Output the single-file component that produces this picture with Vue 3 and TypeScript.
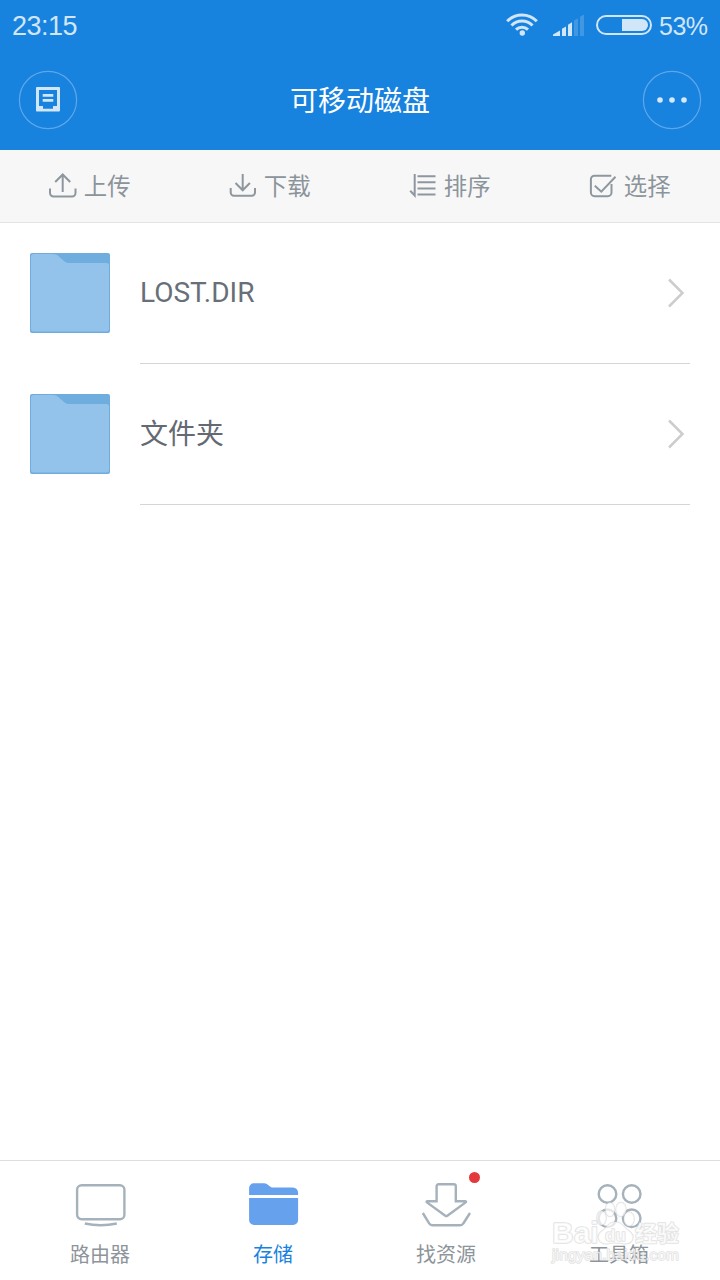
<script setup lang="ts">
interface FileEntry {
  name: string
}

interface Action {
  id: 'upload' | 'download' | 'sort' | 'select'
  label: string
}

interface Tab {
  id: 'router' | 'storage' | 'find' | 'tools'
  label: string
  active?: boolean
  badge?: boolean
}

const actions: Action[] = [
  { id: 'upload', label: '上传' },
  { id: 'download', label: '下载' },
  { id: 'sort', label: '排序' },
  { id: 'select', label: '选择' },
]

const files: FileEntry[] = [{ name: 'LOST.DIR' }, { name: '文件夹' }]

const tabs: Tab[] = [
  { id: 'router', label: '路由器' },
  { id: 'storage', label: '存储', active: true },
  { id: 'find', label: '找资源', badge: true },
  { id: 'tools', label: '工具箱' },
]

const isHan = (text: string): boolean => /[\u4e00-\u9fff]/.test(text)
</script>

<template>
  <div class="screen">
    <header class="header">
      <div class="status">
        <span class="clock">23:15</span>
        <div class="indicators">
          <svg class="wifi" width="34" height="24" viewBox="0 0 34 24" fill="none">
            <g stroke="#d1e6f8" stroke-width="3">
              <path d="M2.2 9.2A20.5 20.5 0 0 1 31.8 9.2" />
              <path d="M6.5 13.5A14.5 14.5 0 0 1 27.5 13.5" />
              <path d="M11 17.6A8.6 8.6 0 0 1 23 17.6" />
            </g>
            <circle cx="17.300" cy="21" r="2.7" fill="#d1e6f8" />
          </svg>
          <svg class="signal" width="31" height="22" viewBox="0 0 31 22">
            <g fill="#d1e6f8">
              <path d="M0 22V20.6L7 16.4V22Z" />
              <path d="M9 22V14.8L13 12.4V22Z" />
              <path d="M15 22V10.8L19 8.2V22Z" />
            </g>
            <g fill="#4297e3">
              <path d="M21 22V6.6L25 4.2V22Z" />
              <path d="M27 22V2.8L31 .4V22Z" />
            </g>
          </svg>
          <svg class="battery" width="56" height="20" viewBox="0 0 56 20">
            <rect x="1" y="1" width="54" height="18" rx="9" fill="none" stroke="#d1e6f8" stroke-width="2" />
            <path d="M26 4H46A6 6 0 0 1 46 16H26Z" fill="#d1e6f8" />
          </svg>
          <span class="percent">53%</span>
        </div>
      </div>
      <div class="titlebar">
        <button class="round" aria-label="设备">
          <svg width="58" height="58" viewBox="0 0 58 58" fill="none">
            <circle cx="29" cy="29" r="28.6" stroke="#5ca8ea" stroke-width="1.2" />
            <path
              fill-rule="evenodd"
              d="M18 16H40A1 1 0 0 1 41 17V39.500A1 1 0 0 1 40 40.500H18A1 1 0 0 1 17 39.500V17A1 1 0 0 1 18 16ZM20 19V35H24V37.700H34V35H38V19Z"
              fill="#d1e6f8"
            />
            <path d="M23.700 24.300H34.300M23.700 29.300H34.300" stroke="#d1e6f8" stroke-width="2.800" />
          </svg>
        </button>
        <h1 class="title">可移动磁盘</h1>
        <button class="round" aria-label="更多">
          <svg width="58" height="58" viewBox="0 0 58 58" fill="none">
            <circle cx="29" cy="29" r="28.6" stroke="#5ca8ea" stroke-width="1.2" />
            <g fill="#d6e9f9">
              <circle cx="17" cy="29" r="2.800" />
              <circle cx="29" cy="29" r="2.800" />
              <circle cx="41" cy="29" r="2.800" />
            </g>
          </svg>
        </button>
      </div>
    </header>

    <div class="toolbar">
      <div v-for="action in actions" :key="action.id" class="action">
        <svg width="28" height="26" viewBox="0 0 28 26" fill="none" stroke="#8e979e" stroke-width="2">
          <template v-if="action.id === 'upload'">
            <path d="M1 15.500V20A3.500 3.500 0 0 0 4.500 23.500H23A3.500 3.500 0 0 0 26.500 20V15.500" />
            <path d="M13.700 19V1.800M6.200 9L13.700 1.500L21.200 9" />
          </template>
          <template v-else-if="action.id === 'download'">
            <path d="M1.700 15V19.500A3.200 3.200 0 0 0 4.900 22.700H22.800A3.200 3.200 0 0 0 26 19.500V15" />
            <path d="M13.700 1V17.500M6.500 10L13.700 17.300L20.900 10" />
          </template>
          <template v-else-if="action.id === 'sort'">
            <path d="M5.700 1V22.500L1.200 17.800M8.500 3.300H26.500M8.500 9.300H26.500M8.500 15.400H26.500M8.500 21.400H26.500" />
          </template>
          <template v-else>
            <path d="M22.300 2.700H5.500A3.600 3.600 0 0 0 1.900 6.300V19.600A3.600 3.600 0 0 0 5.500 23.200H18.900A3.600 3.600 0 0 0 22.500 19.600V11" />
            <path d="M5.800 12.700L12.300 18.700L26.500 3.800" />
          </template>
        </svg>
        <span class="action-label">{{ action.label }}</span>
      </div>
    </div>

    <main class="files">
      <div v-for="file in files" :key="file.name" class="file">
        <svg class="folder" width="80" height="80" viewBox="0 0 80 80">
          <rect width="80" height="80" rx="2" fill="#6faddf" />
          <path
            d="M3.500 1H23C26 1 28 2.500 30 4.500L33.500 7.500C35.500 9.500 37 10 39.500 10H76.500Q79 10 79 12.500V76Q79 78.500 76.500 78.500H3.500Q1 78.500 1 76V3.500Q1 1 3.500 1Z"
            fill="#93c2ea"
          />
        </svg>
        <div class="file-body">
          <span class="file-name" :class="{ han: isHan(file.name) }">{{ file.name }}</span>
          <svg class="chevron" width="18" height="30" viewBox="0 0 18 30" fill="none">
            <path d="M2 1.500L15.500 15L2 28.500" stroke="#cdcdcd" stroke-width="2.500" />
          </svg>
        </div>
      </div>
    </main>

    <nav class="tabs">
      <div v-for="tab in tabs" :key="tab.id" class="tab" :class="{ active: tab.active }">
        <div class="tab-icon">
          <svg width="50" height="46" viewBox="-0.8 0 50 46" fill="none" stroke="#a6b2bb" stroke-width="2.400">
            <template v-if="tab.id === 'router'">
              <rect x="1.300" y="3.200" width="47.300" height="34" rx="4.500" />
              <path d="M9 41.500Q25 45 41 41.500" />
            </template>
            <g v-else-if="tab.id === 'storage'" fill="#66a1ee" stroke="none">
              <path d="M.3 13V6A4.700 4.700 0 0 1 5 1.300H15C18 1.300 19 3 20.500 4L23 5.500H44A5.300 5.300 0 0 1 49.300 11V13Z" />
              <path d="M.3 16H49.300V38A5 5 0 0 1 44.300 43H5.300A5 5 0 0 1 .3 38Z" />
            </g>
            <template v-else-if="tab.id === 'find'">
              <path
                d="M16.800 2.300H32A2 2 0 0 1 34 4.300V19.300H43.500Q45 19.300 43.500 20.600L25.500 33.800Q24.500 34.500 23.500 33.800L5.500 20.600Q4 19.300 5.500 19.300H14.800V4.300A2 2 0 0 1 16.800 2.300Z"
              />
              <path d="M1 31L7.500 41.500Q8.500 43.200 10.500 43.200H38.500Q40.500 43.200 41.500 41.500L48.200 31" />
            </template>
            <template v-else>
              <circle cx="12.700" cy="12" r="8.800" />
              <circle cx="36.900" cy="12" r="8.800" />
              <circle cx="12.700" cy="36.300" r="8.800" />
              <circle cx="36.900" cy="36.300" r="8.800" />
            </template>
          </svg>
          <i v-if="tab.badge" class="badge"></i>
        </div>
        <span class="tab-label">{{ tab.label }}</span>
      </div>
    </nav>

    <svg class="watermark" width="134" height="74" viewBox="0 0 134 74">
      <g class="mark">
        <ellipse cx="50.500" cy="19" rx="4.500" ry="7" />
        <ellipse cx="59" cy="10.500" rx="4.500" ry="7" />
        <ellipse cx="70" cy="10.500" rx="5" ry="7" />
        <ellipse cx="78" cy="20" rx="5" ry="7" />
        <path d="M64.500 23C57 23 56 29 51 32C44 37 48 46 57 44.500C62 43.500 67 43.500 72 44.500C82 46 85 37 78 32C73 29 72 23 64.500 23Z" />
        <text x="1" y="44" font-size="30" font-weight="700">Bai</text>
        <text x="54" y="42" font-size="17" font-weight="700">du</text>
        <text x="84" y="42" font-size="22" font-weight="700">经验</text>
        <text x="1" y="60.500" font-size="15.500" textLength="127">jingyan.baidu.com</text>
      </g>
    </svg>
  </div>
</template>

<style>
body {
  margin: 0;
  background: #fff;
}
</style>

<style scoped>
.screen {
  position: relative;
  width: 720px;
  height: 1280px;
  display: flex;
  flex-direction: column;
  overflow: hidden;
  background: #fff;
  font-family: Roboto, 'Noto Sans CJK SC', sans-serif;
}

.header {
  height: 150px;
  background: #1882df;
  color: #d1e6f8;
}

.status {
  height: 50px;
  box-sizing: border-box;
  padding: 1px 13px 0 12px;
  display: flex;
  align-items: center;
  justify-content: space-between;
  font-family: 'Liberation Sans', Arial, sans-serif;
}

.clock {
  padding-top: 2px;
  font-size: 27px;
  letter-spacing: -0.5px;
}

.indicators {
  display: flex;
  align-items: center;
}

.wifi {
  margin: -3px 14px 0 0;
}

.signal {
  margin: -2px 12px 0 0;
}

.battery {
  margin: -2px 7px 0 0;
}

.percent {
  width: 48px;
  padding-top: 1px;
  font-size: 25px;
  letter-spacing: -0.5px;
}

.titlebar {
  height: 100px;
  box-sizing: border-box;
  padding: 0 19px 0 19px;
  display: flex;
  align-items: center;
  justify-content: space-between;
}

.round {
  width: 58px;
  height: 58px;
  padding: 0;
  border: 0;
  background: none;
}

.round svg {
  display: block;
  overflow: visible;
}

.title {
  margin: 0;
  padding-top: 3px;
  font-size: 28px;
  line-height: 40px;
  font-weight: 400;
  color: #fff;
}

.toolbar {
  height: 73px;
  box-sizing: border-box;
  display: grid;
  grid-template-columns: repeat(4, 1fr);
  background: #f7f7f7;
  border-bottom: 1px solid #e3e3e3;
}

.action {
  display: flex;
  align-items: center;
  justify-content: center;
  gap: 6.5px;
}

.action-label {
  padding-top: 2px;
  font-size: 23.4px;
  line-height: 34px;
  color: #8b949b;
}

.files {
  flex: 1;
}

.file {
  height: 141px;
  padding: 0 30px;
  display: flex;
  align-items: stretch;
  gap: 30px;
}

.folder {
  margin-top: 30px;
}

.file-body {
  flex: 1;
  display: flex;
  align-items: center;
  justify-content: space-between;
  border-bottom: 1px solid #d5d5d5;
}

.file-name {
  font-size: 28px;
  line-height: 40px;
  color: #686f78;
}

.file-name.han {
  padding-top: 2px;
  color: #636a73;
}

.chevron {
  margin-right: 5px;
}

.tabs {
  height: 120px;
  box-sizing: border-box;
  padding: 21px 14.5px 0 13.5px;
  display: grid;
  grid-template-columns: repeat(4, 1fr);
  border-top: 1px solid #dedede;
}

.tab {
  display: flex;
  flex-direction: column;
  align-items: center;
  gap: 13px;
  color: #8d949a;
}

.tab.active {
  color: #1882df;
}

.tab-icon {
  position: relative;
  height: 46px;
}

.tab-icon svg {
  display: block;
  overflow: visible;
}

.badge {
  position: absolute;
  top: -10px;
  left: 47.5px;
  width: 11px;
  height: 11px;
  border-radius: 50%;
  background: #e4393c;
}

.tab-label {
  font-size: 20px;
  line-height: 29px;
}

.watermark {
  position: absolute;
  left: 551px;
  top: 1199px;
  overflow: visible;
}

.mark {
  fill: rgba(255, 255, 255, 0.7);
  stroke: rgba(190, 190, 190, 0.45);
  stroke-width: 1.6;
  stroke-linejoin: round;
  paint-order: stroke;
  font-family: 'Liberation Sans', 'Noto Sans CJK SC', sans-serif;
}
</style>
